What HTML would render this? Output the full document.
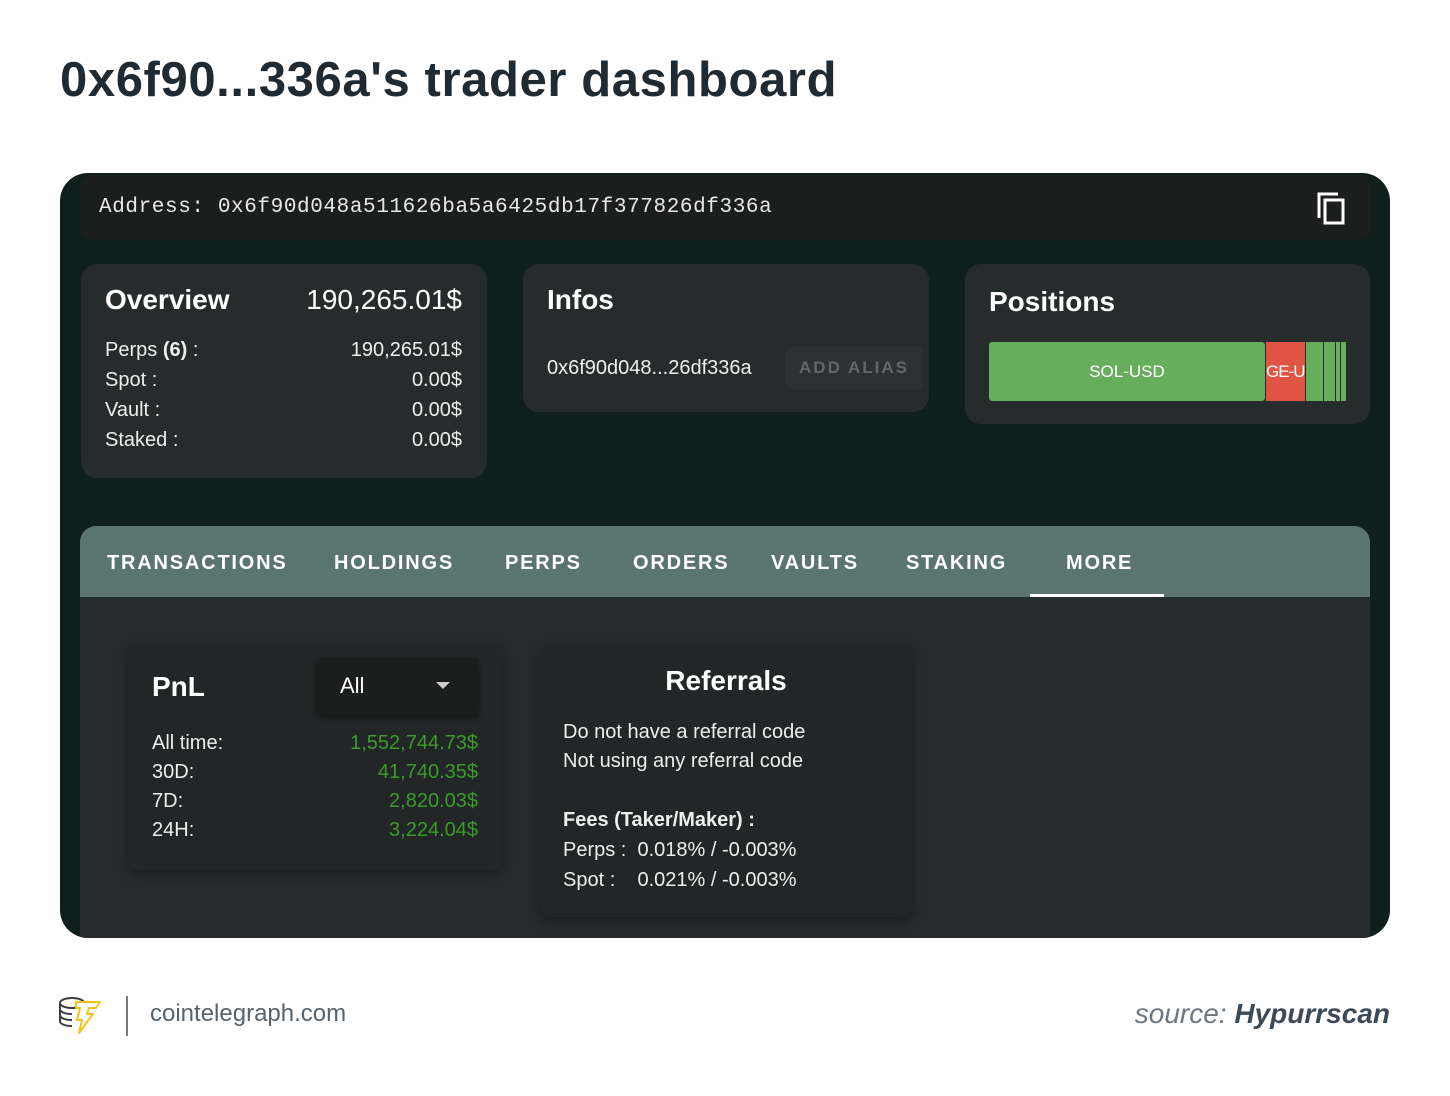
<!DOCTYPE html>
<html><head><style>
*{margin:0;padding:0;box-sizing:border-box}
body{width:1450px;height:1096px;background:#fff;position:relative;font-family:"Liberation Sans",sans-serif;overflow:hidden}
.a{position:absolute}
h1{position:absolute;left:60px;top:52px;font-size:49px;font-weight:bold;color:#1f2a33;letter-spacing:0.6px}
.outer{left:60px;top:173px;width:1330px;height:765px;background:#0e1f1c;border-radius:28px;overflow:hidden}
.addr{left:20px;top:2px;width:1290px;height:65px;background:#1c1e1e;border-radius:12px;color:#e8e8e8;font-family:"Liberation Mono",monospace;font-size:21px;letter-spacing:0.6px;line-height:65px;padding-left:19px}
.card{background:#262b2b;border-radius:16px;color:#fff}
.t{font-size:28px;font-weight:bold}
.row{position:absolute;font-size:20px;color:#eee}
.tabs{left:20px;top:353px;width:1290px;height:71px;background:#5a746f;border-radius:16px 16px 0 0}
.tab{position:absolute;top:26px;font-size:20px;font-weight:bold;letter-spacing:1.8px;color:#fff}
.content{left:20px;top:424px;width:1290px;height:360px;background:#262b2b}
.ic{background:#222626;border-radius:10px;box-shadow:0 4px 12px rgba(0,0,0,.35)}
.g{color:#3b9b2b;text-align:right;right:24px}
</style></head><body>
<h1>0x6f90...336a's trader dashboard</h1>
<div class="a outer">
 <div class="a addr">Address: 0x6f90d048a511626ba5a6425db17f377826df336a
  <svg class="a" style="right:22px;top:16px" width="32" height="36" viewBox="0 0 32 36"><path d="M3 27V3h19" fill="none" stroke="#fff" stroke-width="3"/><rect x="9" y="9" width="18" height="23" fill="none" stroke="#fff" stroke-width="3"/></svg>
 </div>
 <div class="a card" style="left:21px;top:91px;width:406px;height:214px">
  <div class="a t" style="left:24px;top:20px">Overview</div>
  <div class="a" style="right:25px;top:20px;font-size:28px">190,265.01$</div>
  <div class="row" style="left:24px;top:75px">Perps <b>(6)</b> :</div><div class="row" style="right:25px;top:75px">190,265.01$</div>
  <div class="row" style="left:24px;top:105px">Spot :</div><div class="row" style="right:25px;top:105px">0.00$</div>
  <div class="row" style="left:24px;top:135px">Vault :</div><div class="row" style="right:25px;top:135px">0.00$</div>
  <div class="row" style="left:24px;top:165px">Staked :</div><div class="row" style="right:25px;top:165px">0.00$</div>
 </div>
 <div class="a card" style="left:463px;top:91px;width:406px;height:148px">
  <div class="a t" style="left:24px;top:20px">Infos</div>
  <div class="row" style="left:24px;top:93px">0x6f90d048...26df336a</div>
  <div class="a" style="left:262px;top:83px;width:138px;height:42px;background:#2c3232;border-radius:6px;color:#5f6a68;font-size:17px;font-weight:bold;letter-spacing:2px;text-align:center;line-height:42px">ADD ALIAS</div>
 </div>
 <div class="a card" style="left:905px;top:91px;width:405px;height:160px">
  <div class="a t" style="left:24px;top:22px">Positions</div>
  <div class="a" style="left:24px;top:78px;width:276px;height:59px;background:#66ad5c;border-radius:3px;text-align:center;line-height:59px;font-size:17px">SOL-USD</div>
  <div class="a" style="left:301px;top:78px;width:39px;height:59px;background:#e05443;line-height:59px;font-size:17px;overflow:hidden;white-space:nowrap;letter-spacing:-1px">GE-U</div>
  <div class="a" style="left:341px;top:78px;width:17px;height:59px;background:#66ad5c"></div>
  <div class="a" style="left:359px;top:78px;width:11px;height:59px;background:#66ad5c"></div>
  <div class="a" style="left:371px;top:78px;width:4px;height:59px;background:#66ad5c"></div>
  <div class="a" style="left:376px;top:78px;width:5px;height:59px;background:#66ad5c"></div>
 </div>
 <div class="a tabs">
  <div class="tab" style="left:27px">TRANSACTIONS</div>
  <div class="tab" style="left:254px">HOLDINGS</div>
  <div class="tab" style="left:425px">PERPS</div>
  <div class="tab" style="left:553px">ORDERS</div>
  <div class="tab" style="left:691px">VAULTS</div>
  <div class="tab" style="left:826px">STAKING</div>
  <div class="tab" style="left:986px">MORE</div>
  <div class="a" style="left:950px;top:68px;width:134px;height:3px;background:#fff"></div>
 </div>
 <div class="a content">
  <div class="a ic" style="left:48px;top:48px;width:374px;height:225px;color:#fff">
   <div class="a t" style="left:24px;top:26px">PnL</div>
   <div class="a" style="left:188px;top:12px;width:162px;height:58px;background:#1c1e1e;border-radius:4px;box-shadow:0 3px 6px rgba(0,0,0,.4)">
    <div class="a" style="left:24px;top:16px;font-size:22px">All</div>
    <div class="a" style="left:120px;top:25px;border-left:7px solid transparent;border-right:7px solid transparent;border-top:7px solid #ccc"></div>
   </div>
   <div class="row" style="left:24px;top:87px">All time:</div><div class="row g" style="top:87px">1,552,744.73$</div>
   <div class="row" style="left:24px;top:116px">30D:</div><div class="row g" style="top:116px">41,740.35$</div>
   <div class="row" style="left:24px;top:145px">7D:</div><div class="row g" style="top:145px">2,820.03$</div>
   <div class="row" style="left:24px;top:174px">24H:</div><div class="row g" style="top:174px">3,224.04$</div>
  </div>
  <div class="a ic" style="left:460px;top:48px;width:372px;height:272px;color:#fff">
   <div class="a t" style="left:0;width:372px;text-align:center;top:20px">Referrals</div>
   <div class="row" style="left:23px;top:76px">Do not have a referral code</div>
   <div class="row" style="left:23px;top:105px">Not using any referral code</div>
   <div class="row" style="left:23px;top:164px;font-weight:bold">Fees (Taker/Maker) :</div>
   <div class="row" style="left:23px;top:194px">Perps :&nbsp; 0.018% / -0.003%</div>
   <div class="row" style="left:23px;top:224px">Spot :&nbsp;&nbsp;&nbsp; 0.021% / -0.003%</div>
  </div>
 </div>
</div>
<svg class="a" style="left:58px;top:995px" width="46" height="40" viewBox="0 0 46 40"><g fill="none" stroke="#3a3f44" stroke-width="2"><ellipse cx="14" cy="8" rx="12" ry="5"/><path d="M2 8v18c0 3 5 5 12 5M2 14c0 3 5 5 12 5M2 20c0 3 5 5 12 5"/></g><path d="M18 7h24l-4 6h-7l-2 6h6l-14 19 3-13h-5l3-12h-4z" fill="#fff" stroke="#f4c21d" stroke-width="2" stroke-linejoin="round"/></svg>
<div class="a" style="left:126px;top:996px;width:2px;height:40px;background:#777"></div>
<div class="a" style="left:150px;top:1000px;font-size:24px;color:#56636d">cointelegraph.com</div>
<div class="a" style="right:60px;top:998px;font-size:28px;color:#6b7680;font-style:italic">source: <b style="color:#3c4a58">Hypurrscan</b></div>
</body></html>
